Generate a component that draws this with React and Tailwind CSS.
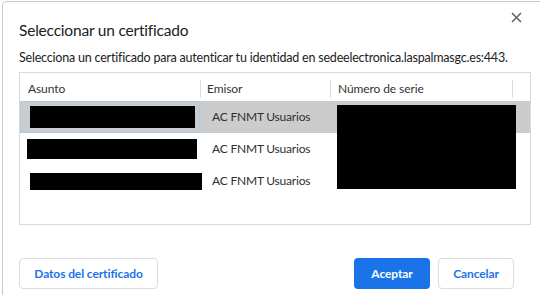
import React from "react";

const FONT = { fontFamily: 'Lato, "Noto Sans", sans-serif' };

function CloseIcon() {
  return (
    <svg className="w-[11px] h-[11px]" viewBox="0 0 11 11" fill="none" stroke="#5f6368" strokeWidth={1.5}>
      <path d="M1 1L10 10M10 1L1 10" />
    </svg>
  );
}

const rows = [
  { asunto: "ml-[9px] mr-[4px] h-[22px]", serie: "mt-[4px] h-[28px]", selected: true },
  { asunto: "ml-[7px] mr-[3px] h-[20px]", serie: "h-[32px]", selected: false },
  { asunto: "ml-[10px] -mr-[2px] h-[17px]", serie: "h-[24px] mb-[8px]", selected: false },
];

export default function App() {
  return (
    <div className="w-[540px] h-[295px] overflow-hidden bg-white pl-[2px] pt-[1px]" style={FONT}>
      <div className="w-[560px] h-[320px] border-l border-t border-[#c9c9c9] rounded-tl-[5px] bg-white flex flex-col pl-[16px] text-[#202124]">
        {/* HEADER */}
        <div className="flex items-start justify-between pr-[40px]">
          <h1 className="text-[15.5px] leading-[20px] tracking-[-0.2px] mt-[18px]">Seleccionar un certificado</h1>
          <button className="mt-[10px]">
            <CloseIcon />
          </button>
        </div>
        <p className="text-[12.5px] leading-[16px] tracking-[-0.2px] mt-[10px] whitespace-nowrap text-[#202124]">
          Selecciona un certificado para autenticar tu identidad en sedeelectronica.laspalmasgc.es:443.
        </p>

        {/* TABLE */}
        <div className="mt-[6px] w-[512px] h-[153px] border border-[#d9d9d9] pt-[4px]">
          <div className="grid grid-cols-[180px_130px_199px] h-[24px] text-[12px] tracking-[-0.1px] text-[#333333]">
            <div className="flex items-center pl-[8px]">Asunto</div>
            <div className="flex items-center pl-[6px] border-l border-[#dddddd] my-[3px]">Emisor</div>
            <div className="flex items-center pl-[7px] border-l border-[#dddddd] my-[3px] border-r mr-[16px]">
              Número de serie
            </div>
          </div>
          {rows.map((r, i) => (
            <div
              key={i}
              className={`grid grid-cols-[180px_130px_199px] h-[32px] text-[12px] tracking-[-0.2px] ${r.selected ? "bg-[#cccccc]" : ""}`}
            >
              <div className={`flex items-center ${r.selected ? "border border-[#a9cdeb]" : ""}`}>
                <div className={`flex-1 bg-black ${r.asunto}`} />
              </div>
              <div className="flex items-center pl-[12px] text-[#303030]">AC FNMT Usuarios</div>
              <div className="pl-[7px] pr-[13px] flex flex-col">
                <div className={`bg-black ${r.serie}`} />
              </div>
            </div>
          ))}
        </div>

        {/* FOOTER */}
        <div className="mt-[33px] w-[495px] flex items-center justify-between text-[12px] font-bold tracking-[-0.1px]">
          <button className="h-[31px] w-[139px] rounded-[4px] border border-[#dadce0] text-[#1a73e8] bg-white">
            Datos del certificado
          </button>
          <div className="flex gap-[8px]">
            <button className="h-[31px] w-[76px] rounded-[4px] bg-[#1a73e8] text-white">Aceptar</button>
            <button className="h-[31px] w-[76px] rounded-[4px] border border-[#dadce0] text-[#1a73e8] bg-white">
              Cancelar
            </button>
          </div>
        </div>
      </div>
    </div>
  );
}
